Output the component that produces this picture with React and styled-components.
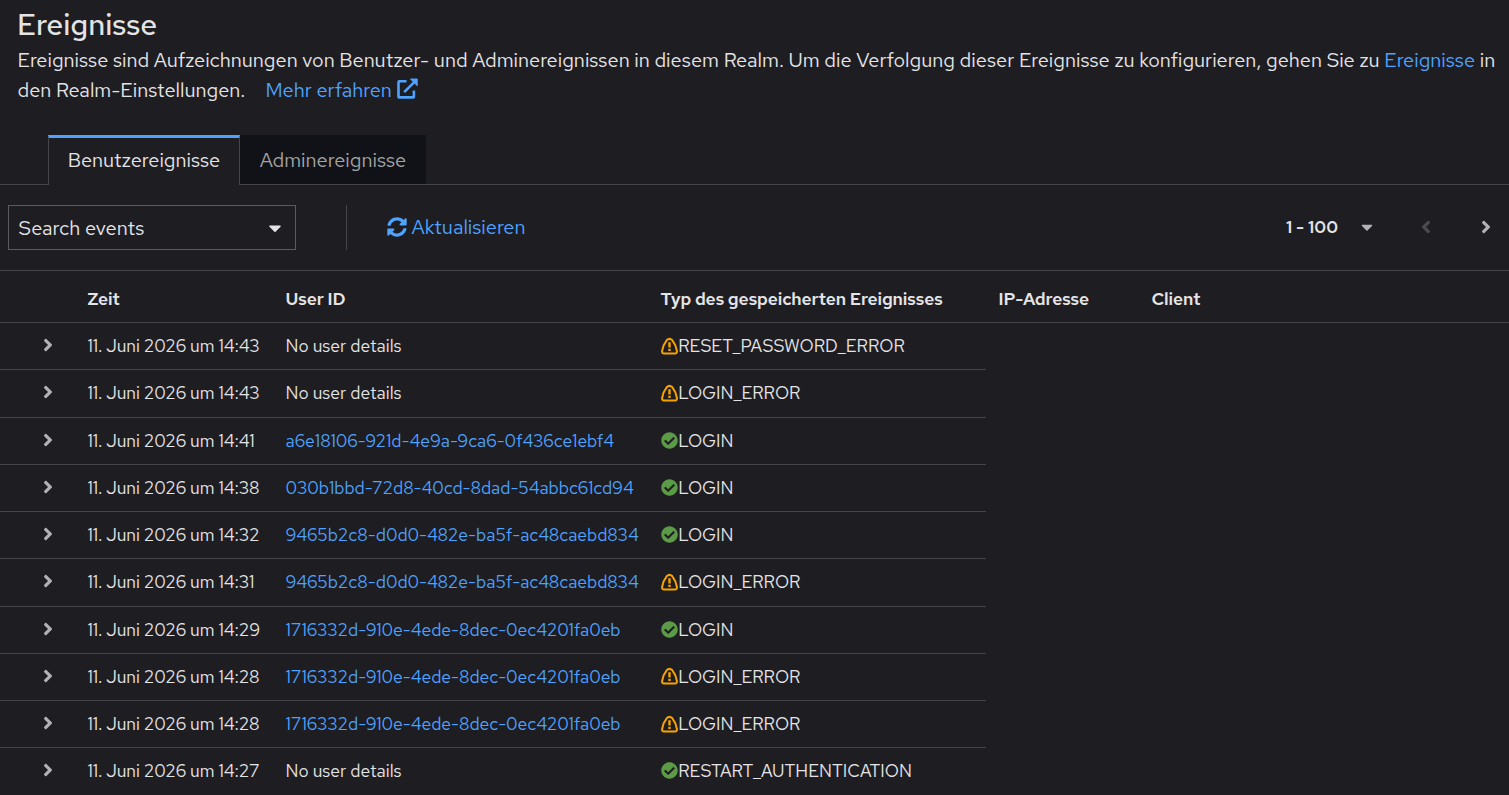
import React from "react";
import styled, { createGlobalStyle } from "styled-components";
import {
  FaAngleLeft,
  FaAngleRight,
  FaCaretDown,
  FaCheckCircle,
  FaSyncAlt,
} from "react-icons/fa";

const colors = {
  background: "#1e1d22",
  inactive: "#111217",
  text: "#e4e4e6",
  subtle: "#a3a3a3",
  border: "#464649",
  link: "#4da3ff",
  warning: "#f5a300",
  success: "#5b9a46",
  control: "#b2b2b4",
};

const GlobalStyle = createGlobalStyle`
  * {
    box-sizing: border-box;
  }

  body {
    margin: 0;
    overflow: hidden;
    background: ${colors.background};
    color: ${colors.text};
    font-family: "Red Hat Text", Inter, "Open Sans", sans-serif;
  }

  a {
    color: ${colors.link};
    text-decoration: none;
  }
`;

const Page = styled.main`
  width: 100%;
  height: 795px;
  overflow: hidden;
`;

const Header = styled.header`
  height: 135px;
  padding: 7px 0 0 17.5px;
`;

const Title = styled.h1`
  margin: 0 0 0 -0.5px;
  font-size: 30px;
  font-weight: 500;
  line-height: 35px;
  letter-spacing: -0.05px;
`;

const Description = styled.p`
  margin: 3px 0 0;
  font-size: 20px;
  line-height: 30px;
  white-space: nowrap;
`;

const LearnMore = styled.a`
  display: inline-flex;
  align-items: center;
  gap: 5px;
  margin-left: 20px;

  svg {
    margin-top: -3px;
  }
`;

const Tabs = styled.nav`
  display: flex;
  height: 50px;
  padding-left: 48px;
  background: linear-gradient(${colors.border}, ${colors.border}) bottom / 100% 1px no-repeat;
`;

const Tab = styled.button`
  width: ${({ $active }) => ($active ? "192px" : "186px")};
  height: ${({ $active }) => ($active ? "50px" : "49px")};
  padding: ${({ $active }) => ($active ? "0 0 3px" : "0")};
  border: 0 solid ${colors.border};
  border-width: ${({ $active }) => ($active ? "0 1px" : "0")};
  border-top: ${({ $active }) => ($active ? `3px solid ${colors.link}` : "0")};
  background: ${({ $active }) => ($active ? colors.background : colors.inactive)};
  color: ${({ $active }) => ($active ? colors.text : colors.subtle)};
  font: inherit;
  font-size: 20px;
`;

const Toolbar = styled.div`
  display: flex;
  align-items: center;
  height: 85px;
  padding: 0 13px 0 8px;
`;

const SearchSelect = styled.button`
  display: flex;
  align-items: center;
  justify-content: space-between;
  width: 288px;
  height: 45px;
  padding: 0 10px 0 9.5px;
  border: 1px solid #5c5b60;
  background: transparent;
  color: ${colors.text};
  font: inherit;
  font-size: 20px;
`;

const Divider = styled.span`
  width: 1px;
  height: 45px;
  margin-left: 50px;
  background: ${colors.border};
`;

const Refresh = styled.a`
  display: flex;
  align-items: center;
  gap: 4.5px;
  margin-left: 40px;
  padding-bottom: 2px;
  font-size: 20px;
`;

const Pagination = styled.div`
  display: flex;
  align-items: center;
  margin-left: auto;
  padding-bottom: 2px;
  color: ${colors.control};
`;

const PageRange = styled.span`
  margin-right: 20px;
  color: ${colors.text};
  font-size: 17.5px;
  font-weight: 600;
`;

const PageButton = styled.span`
  display: flex;
  margin-left: 40px;
  color: ${({ $disabled }) => ($disabled ? "#4c4b50" : colors.control)};
`;

const Table = styled.div`
  border-top: 1px solid ${colors.border};
  font-size: 17.5px;
`;

const HeadRow = styled.div`
  display: grid;
  grid-template-columns: 87.5px 198px 375px 338px 153px 1fr;
  align-items: center;
  height: 51.2px;
  padding-top: 3px;
  font-weight: 600;
  letter-spacing: -0.12px;
`;

const Row = styled.div`
  display: grid;
  grid-template-columns: 87.4px 198.1px 375.5px 1fr;
  align-items: center;
  width: 986px;
  height: 47.25px;
  padding-bottom: 1.6px;
  border-top: 1px solid ${colors.border};

  /* the line under the header spans the whole table */
  &:first-of-type {
    width: 100%;
  }
`;

const Body = styled.section`
  display: flex;
  flex-direction: column;
`;

const Expand = styled.span`
  display: flex;
  padding: 0 0 1px 37.7px;
  color: ${colors.control};
`;

const Cell = styled.span`
  white-space: nowrap;
  letter-spacing: ${({ $spacing }) => $spacing};
`;

const EventType = styled.span`
  display: flex;
  align-items: center;

  svg {
    flex: none;
    margin-right: 0.3px;
  }
`;

const ExternalIcon = () => (
  <svg width="21" height="21" viewBox="0 0 21 21" fill="none" stroke={colors.link}>
    <path d="M9.5 3.3H2.2q-.7 0-.7.7v14.7q0 .7.7.7h14q.7 0 .7-.7V12.5" strokeWidth="2.6" />
    <path d="M7.2 14.2 17.5 3.9" strokeWidth="2.6" />
    <path d="M13.5 1H20.2V7.7Z" fill={colors.link} stroke={colors.link} strokeLinejoin="round" />
  </svg>
);

const WarningIcon = () => (
  <svg width="17" height="18" viewBox="0 0 17 18" fill="none" stroke={colors.warning}>
    <path
      d="M5.8 3.1Q8.5 .6 11.2 3.1Q15 7.9 15.9 14Q16.1 16.4 14 16.4H3Q.9 16.4 1.1 14Q2 7.9 5.8 3.1Z"
      strokeWidth="2"
      strokeLinejoin="round"
    />
    <path d="M8.5 5.2v5.2M8.5 11.8v2.2" strokeWidth="2.4" />
  </svg>
);

const events = [
  { time: "14:43", type: "RESET_PASSWORD_ERROR" },
  { time: "14:43", type: "LOGIN_ERROR" },
  { time: "14:41", user: "a6e18106-921d-4e9a-9ca6-0f436ce1ebf4", type: "LOGIN" },
  { time: "14:38", user: "030b1bbd-72d8-40cd-8dad-54abbc61cd94", type: "LOGIN" },
  { time: "14:32", user: "9465b2c8-d0d0-482e-ba5f-ac48caebd834", type: "LOGIN" },
  { time: "14:31", user: "9465b2c8-d0d0-482e-ba5f-ac48caebd834", type: "LOGIN_ERROR" },
  { time: "14:29", user: "1716332d-910e-4ede-8dec-0ec4201fa0eb", type: "LOGIN" },
  { time: "14:28", user: "1716332d-910e-4ede-8dec-0ec4201fa0eb", type: "LOGIN_ERROR" },
  { time: "14:28", user: "1716332d-910e-4ede-8dec-0ec4201fa0eb", type: "LOGIN_ERROR" },
  { time: "14:27", type: "RESTART_AUTHENTICATION" },
];

const App = () => (
  <Page>
    <GlobalStyle />
    <Header>
      <Title>Ereignisse</Title>
      <Description>
        Ereignisse sind Aufzeichnungen von Benutzer- und Adminereignissen in diesem Realm. Um die
        Verfolgung dieser Ereignisse zu konfigurieren, gehen Sie zu <a href="#realm">Ereignisse</a> in
        <br />
        den Realm-Einstellungen.
        <LearnMore href="#docs">
          Mehr erfahren <ExternalIcon />
        </LearnMore>
      </Description>
    </Header>

    <Tabs>
      <Tab $active>Benutzereignisse</Tab>
      <Tab>Adminereignisse</Tab>
    </Tabs>

    <Toolbar>
      <SearchSelect>
        Search events <FaCaretDown size={20} />
      </SearchSelect>
      <Divider />
      <Refresh href="#refresh">
        <FaSyncAlt size={20} /> Aktualisieren
      </Refresh>
      <Pagination>
        <PageRange>1 - 100</PageRange>
        <FaCaretDown size={18} />
        <PageButton $disabled>
          <FaAngleLeft size={20} />
        </PageButton>
        <PageButton>
          <FaAngleRight size={20} />
        </PageButton>
      </Pagination>
    </Toolbar>

    <Table>
      <HeadRow>
        <span />
        <Cell>Zeit</Cell>
        <Cell>User ID</Cell>
        <Cell>Typ des gespeicherten Ereignisses</Cell>
        <Cell>IP-Adresse</Cell>
        <Cell>Client</Cell>
      </HeadRow>
      <Body>
        {events.map((event, index) => (
          <Row key={index}>
            <Expand>
              <FaAngleRight size={20} />
            </Expand>
            <Cell $spacing="-0.07px">11. Juni 2026 um {event.time}</Cell>
            {event.user ? (
              <Cell $spacing="-0.04px">
                <a href="#user">{event.user}</a>
              </Cell>
            ) : (
              <Cell>No user details</Cell>
            )}
            <EventType>
              {event.type.endsWith("ERROR") ? (
                <WarningIcon />
              ) : (
                <FaCheckCircle size={17} color={colors.success} />
              )}
              {event.type}
            </EventType>
          </Row>
        ))}
      </Body>
    </Table>
  </Page>
);

export default App;
